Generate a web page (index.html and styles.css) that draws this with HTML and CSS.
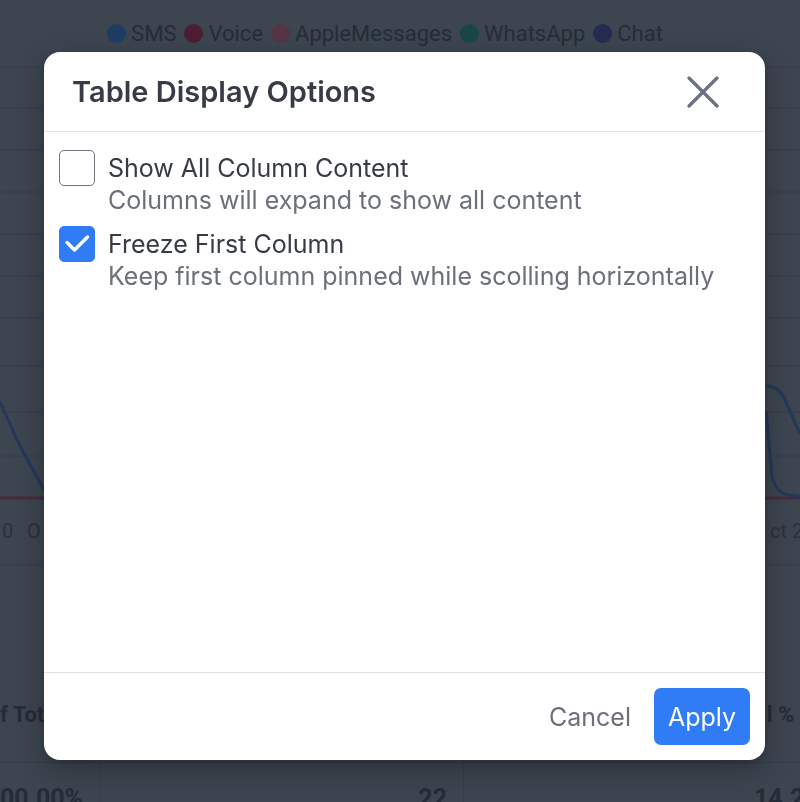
FILE: index.html
```html
<!DOCTYPE html>
<html lang="en">
<head>
<meta charset="utf-8">
<title>Table Display Options</title>
<link rel="stylesheet" href="styles.css">
</head>
<body>
<div class="page">
  <div class="legend">
    <span class="lg"><i class="dot sms"></i>SMS</span>
    <span class="lg"><i class="dot voice"></i>Voice</span>
    <span class="lg"><i class="dot apple"></i>AppleMessages</span>
    <span class="lg"><i class="dot wa"></i>WhatsApp</span>
    <span class="lg"><i class="dot chat"></i>Chat</span>
  </div>
  <svg class="chart" width="800" height="500" viewBox="0 0 800 500">
    <g stroke="#353e49" stroke-width="1">
      <line x1="0" y1="1" x2="800" y2="1"/>
      <line x1="0" y1="42" x2="800" y2="42"/>
      <line x1="0" y1="84" x2="800" y2="84"/>
      <line x1="0" y1="126" x2="800" y2="126"/>
      <line x1="0" y1="168" x2="800" y2="168"/>
      <line x1="0" y1="210" x2="800" y2="210"/>
      <line x1="0" y1="252" x2="800" y2="252"/>
      <line x1="0" y1="300" x2="800" y2="300"/>
      <line x1="0" y1="346" x2="800" y2="346"/>
      <line x1="0" y1="390" x2="800" y2="390"/>
      <line x1="0" y1="499" x2="800" y2="499"/>
    </g>
    <line x1="0" y1="432" x2="800" y2="432" stroke="#4a2a3a" stroke-width="3"/>
    <path d="M0 336 L20 380 L44 424" fill="none" stroke="#23385a" stroke-width="3"/>
    <path d="M766 320 C775 320 780 324 785 334 L800 368 M766 345 L772 410 C776 426 782 430 800 430" fill="none" stroke="#23385a" stroke-width="3"/>
    <text x="2" y="472" class="axis">0</text>
    <text x="27" y="472" class="axis">O</text>
    <text x="770" y="472" class="axis">ct 2</text>
  </svg>
  <div class="table">
    <div class="thead">
      <div class="th th1">f Tot</div>
      <div class="th th2"></div>
      <div class="th th3">l % :</div>
    </div>
    <div class="trow">
      <div class="td td1">00.00%</div>
      <div class="td td2">22</div>
      <div class="td td3">14.2</div>
    </div>
  </div>
</div>

<div class="overlay">
  <div class="modal" role="dialog" aria-labelledby="dlg-title">
    <div class="modal-head">
      <h2 id="dlg-title" class="modal-title">Table Display Options</h2>
      <button class="close" aria-label="Close">
        <svg width="34" height="34" viewBox="0 0 34 34"><path d="M3 3 L31 31 M31 3 L3 31" stroke="#6b7280" stroke-width="3.4" stroke-linecap="round" fill="none"/></svg>
      </button>
    </div>
    <div class="modal-body">
      <label class="option">
        <span class="box"></span>
        <span class="texts">
          <span class="opt-title">Show All Column Content</span>
          <span class="opt-sub">Columns will expand to show all content</span>
        </span>
      </label>
      <label class="option">
        <span class="box checked">
          <svg width="36" height="36" viewBox="0 0 36 36"><path d="M8 16.5 L15.5 24 L28.5 11" stroke="#fff" stroke-width="3.4" stroke-linecap="round" stroke-linejoin="round" fill="none"/></svg>
        </span>
        <span class="texts">
          <span class="opt-title">Freeze First Column</span>
          <span class="opt-sub">Keep first column pinned while scolling horizontally</span>
        </span>
      </label>
    </div>
    <div class="modal-foot">
      <button class="btn btn-cancel">Cancel</button>
      <button class="btn btn-apply">Apply</button>
    </div>
  </div>
</div>
</body>
</html>
```

FILE: styles.css
```css
* { box-sizing: border-box; }
html, body { margin: 0; padding: 0; }
body {
  width: 800px;
  height: 802px;
  overflow: hidden;
  background: #3c4550;
  font-family: Inter, "Noto Sans", sans-serif;
}
.page {
  width: 800px;
  height: 802px;
  display: flex;
  flex-direction: column;
  overflow: hidden;
}
.page > * { flex: none; }
.legend {
  height: 66px;
  display: flex;
  align-items: center;
  justify-content: center;
  gap: 8px;
  font-family: Roboto, "Liberation Sans", sans-serif;
  font-size: 22px;
  color: #252d39;
  padding-right: 30px;
}
.lg { display: flex; align-items: center; gap: 5px; }
.dot { display: inline-block; width: 19px; height: 19px; border-radius: 50%; }
.sms { background: #213c63; }
.voice { background: #4d1e33; }
.apple { background: #553443; }
.wa { background: #1c4645; }
.chat { background: #252c52; }
.chart { display: block; }
.axis { font-family: Roboto, "Liberation Sans", sans-serif; font-size: 20px; fill: #2a323e; }
.table { margin-top: 122px; }
.thead {
  height: 75px;
  display: grid;
  grid-template-columns: 100px 364px 336px;
  align-items: start;
  padding-top: 14px;
  border-bottom: 1px solid #353e49;
  font-family: Roboto, "Liberation Sans", sans-serif;
  font-weight: 700;
  font-size: 22px;
  line-height: 26px;
  color: #242c37;
}
.th1 { margin-left: 0; white-space: nowrap; }
.th3 { justify-self: end; white-space: nowrap; margin-right: -6px; }
.trow {
  height: 60px;
  display: grid;
  grid-template-columns: 100px 364px 336px;
  font-family: Roboto, "Liberation Sans", sans-serif;
  font-weight: 700;
  font-size: 25px;
  line-height: 28px;
  color: #242c37;
}
.td { border-right: 1px solid #353e49; padding-top: 22px; text-align: right; padding-right: 16px; white-space: nowrap; }
.td1 { padding-right: 17px; }
.td3 { text-align: left; padding-left: 290px; border-right: none; }

.overlay {
  position: fixed;
  inset: 0;
  padding: 52px 0 0 44px;
}
.modal {
  width: 721px;
  height: 708px;
  background: #ffffff;
  border-radius: 16px;
  box-shadow: 0 10px 30px rgba(0, 0, 0, 0.25), 0 4px 10px rgba(0, 0, 0, 0.15);
  display: flex;
  flex-direction: column;
  overflow: hidden;
}
.modal-head {
  height: 80px;
  flex: none;
  display: flex;
  align-items: center;
  justify-content: space-between;
  padding: 0 45px 0 28px;
  border-bottom: 1px solid #e2e4e8;
}
.modal-title {
  margin: 0;
  font-size: 29px;
  font-weight: 600;
  color: #363b46;
}
.close {
  border: 0;
  background: none;
  padding: 0;
  width: 34px;
  height: 34px;
  display: flex;
  cursor: pointer;
}
.modal-body {
  flex: 1;
  padding: 18px 15px;
  display: flex;
  flex-direction: column;
  gap: 12px;
}
.option {
  display: flex;
  gap: 13px;
  align-items: flex-start;
  cursor: pointer;
}
.box {
  flex: none;
  width: 36px;
  height: 36px;
  border: 1.5px solid #70757f;
  border-radius: 5px;
  display: flex;
  align-items: center;
  justify-content: center;
}
.box.checked {
  background: #307cf6;
  border-color: #307cf6;
}
.box.checked svg { flex: none; }
.texts { display: flex; flex-direction: column; }
.opt-title {
  font-size: 25px;
  line-height: 36px;
  color: #363b46;
}
.opt-sub {
  font-size: 25px;
  line-height: 28px;
  color: #6b7079;
}
.modal-foot {
  height: 88px;
  flex: none;
  border-top: 1px solid #dfe1e6;
  display: flex;
  align-items: center;
  justify-content: flex-end;
  gap: 7px;
  padding: 0 15px;
}
.btn {
  font-family: Inter, "Noto Sans", sans-serif;
  font-size: 25px;
  border: 0;
  border-radius: 7px;
  height: 57px;
  padding: 0 16px;
  cursor: pointer;
}
.btn-cancel { background: transparent; color: #6b7079; }
.btn-apply { background: #307cf6; color: #ffffff; width: 96px; padding: 0; }
```
